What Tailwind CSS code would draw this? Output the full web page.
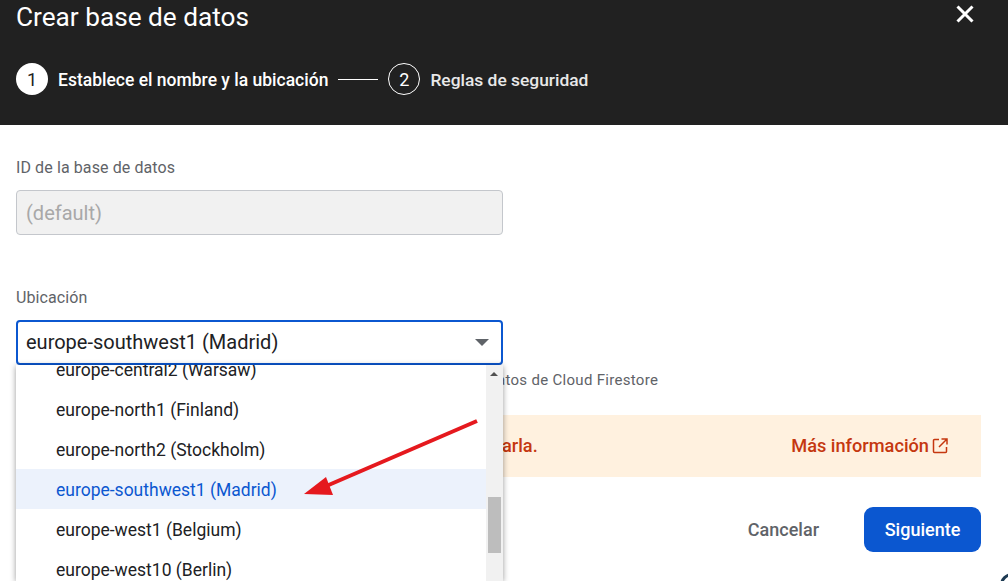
<!DOCTYPE html>
<html><head><meta charset="utf-8"><script src="https://cdn.jsdelivr.net/npm/@tailwindcss/browser@4"></script></head>
<body class="m-0">
<div class="relative w-[1008px] h-[581px] overflow-hidden bg-white font-['Roboto',sans-serif]">
  <header class="h-[125px] bg-[#212121] text-white relative px-4">
    <h1 class="text-[26.2px] leading-[34px] font-normal text-white">Crear base de datos</h1>
    <button class="absolute left-[953px] top-[2px] w-6 h-6 flex items-center justify-center">
      <svg width="24" height="24" viewBox="0 0 24 24"><path d="M4.5 4.5 19.5 19.5M19.500 4.5 4.5 19.500" stroke="#fff" stroke-width="3" fill="none"/></svg>
    </button>
    <div class="flex items-center mt-[29px] h-8">
      <span class="w-8 h-8 rounded-full bg-white text-[#212121] text-[18px] flex items-center justify-center">1</span>
      <span class="ml-[10px] pt-[2px] text-[17.5px] font-medium">Establece el nombre y la ubicación</span>
      <span class="ml-[10px] w-10 h-px bg-white"></span>
      <span class="ml-[10px] w-8 h-8 rounded-full border border-white text-[18px] flex items-center justify-center">2</span>
      <span class="ml-[10px] pt-[2px] text-[17.4px] font-medium text-white/90">Reglas de seguridad</span>
    </div>
  </header>
  <main class="px-4 relative">
    <div class="mt-[33px] text-[16px] leading-5 text-[#5f6368] tracking-[0.1px]">ID de la base de datos</div>
    <div class="mt-[12px] w-[487px] h-[45px] rounded border border-[#c4c7cc] bg-[#f1f1f1] px-[9px] flex items-center text-[20px] text-[#a8a8a8]">(default)</div>
    <div class="mt-[53px] text-[16px] leading-5 text-[#5f6368] tracking-[0.1px]">Ubicación</div>
    <div class="mt-[12px] w-[487px] h-[45px] rounded border-2 border-[#0b57d0] pl-2 pr-2 pb-[2px] flex items-center justify-between text-[20px] text-[#202124]">
      <span>europe-southwest1 (Madrid)</span>
      <span class="w-0 h-0 mr-[4px] mt-[2px] border-x-[7px] border-x-transparent border-t-[7px] border-t-[#5f6368]"></span>
    </div>
    <div class="mt-[5px] h-5 pl-[481px] text-[15px] leading-5 text-[#5f6368] tracking-[0.3px]">atos de Cloud Firestore</div>
    <div class="mt-[25px] w-[965px] h-[62px] bg-[#fff1df] flex items-center justify-end pr-[33px] text-[#c5370f] text-[18.2px] font-medium relative">
      <span class="absolute left-[486px]">arla.</span>
      <span class="flex items-center gap-[3px]">Más información
        <svg width="16" height="16" viewBox="0 0 16 16" fill="none" stroke="#c5370f" stroke-width="1.5"><path d="M7 1.5H2.5a1 1 0 0 0-1 1v11a1 1 0 0 0 1 1h11a1 1 0 0 0 1-1V9M9.5 1H15v5.500M15 1 7 9"/></svg>
      </span>
    </div>
    <div class="mt-[30px] w-[965px] flex justify-end items-center">
      <span class="mr-[45px] text-[18px] font-medium text-[#5f6368]">Cancelar</span>
      <button class="w-[117px] h-[45px] rounded-[9px] bg-[#0b57d0] text-white text-[18px] font-medium">Siguiente</button>
    </div>
  </main>

  <div class="absolute left-[16px] top-[365px] w-[487px] h-[216px] bg-white shadow-[0_1px_6px_rgba(0,0,0,0.4)] overflow-hidden flex">
    <ul class="w-[470px] text-[17.5px] text-[#202124]">
      <li class="h-10 flex items-center pl-10 pt-[2px] -mt-[16px]">europe-central2 (Warsaw)</li>
      <li class="h-10 flex items-center pl-10 pt-[2px]">europe-north1 (Finland)</li>
      <li class="h-10 flex items-center pl-10 pt-[2px]">europe-north2 (Stockholm)</li>
      <li class="h-10 flex items-center pl-10 pt-[2px] bg-[#ecf2fc] text-[#0b57d0]">europe-southwest1 (Madrid)</li>
      <li class="h-10 flex items-center pl-10 pt-[2px]">europe-west1 (Belgium)</li>
      <li class="h-10 flex items-center pl-10 pt-[2px]">europe-west10 (Berlin)</li>
    </ul>
    <div class="relative w-[17px] bg-[#f1f1f1]">
      <span class="absolute left-[4px] top-[7px] w-0 h-0 border-x-[4px] border-x-transparent border-b-[4px] border-b-[#505050]"></span>
      <span class="absolute left-[2px] top-[132px] w-[13px] h-[56px] bg-[#bdbdbd]"></span>
    </div>
  </div>

  <svg class="absolute left-0 top-0 pointer-events-none" width="1008" height="581" viewBox="0 0 1008 581">
    <path d="M477 421 324 487" stroke="#e5191e" stroke-width="4" fill="none"/>
    <path d="M304 494 326 477 333 495Z" fill="#e5191e"/>
  </svg>
  <div class="absolute right-[-16px] bottom-[-16px] w-6 h-6 rounded-full border-[3px] border-[#1d3a52]"></div>
</div>
</body></html>
